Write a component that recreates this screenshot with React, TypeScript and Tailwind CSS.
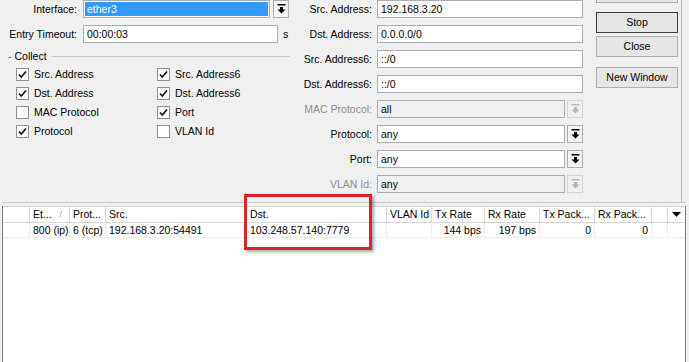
import React from "react";

const DropIcon = ({ disabled = false }: { disabled?: boolean }) => (
  <svg width="9" height="10" viewBox="0 0 9 10">
    <rect x="0.5" y="0" width="8" height="1.5" fill={disabled ? "#b5b5b5" : "#000"} />
    <rect x="3" y="3" width="3" height="3" fill={disabled ? "#b5b5b5" : "#000"} />
    <polygon points="0.5,5.5 8.5,5.5 4.5,9.5" fill={disabled ? "#b5b5b5" : "#000"} />
  </svg>
);

const DropBtn = ({ disabled = false }: { disabled?: boolean }) => (
  <div
    className={`w-[16px] h-[18px] flex items-center justify-center border ${
      disabled ? "border-[#d4d4d4] bg-[#f0f0f0]" : "border-[#adadad] bg-[#f4f4f4]"
    }`}
  >
    <DropIcon disabled={disabled} />
  </div>
);

const Check = ({ on }: { on: boolean }) => (
  <div className="w-[13px] h-[13px] border border-[#8f8f8f] bg-white flex items-center justify-center">
    {on && (
      <svg width="11" height="11" viewBox="0 0 11 11">
        <path d="M2 5.5 L4.3 8 L9 2.5" stroke="#111" strokeWidth="1.7" fill="none" />
      </svg>
    )}
  </div>
);

const CheckRow = ({ on, label }: { on: boolean; label: string }) => (
  <div className="flex items-center h-[19px]">
    <Check on={on} />
    <span className="ml-[5px]">{label}</span>
  </div>
);

const Field = ({
  label,
  value,
  drop = false,
  disabled = false,
}: {
  label: string;
  value: string;
  drop?: boolean;
  disabled?: boolean;
}) => (
  <div className="flex items-center h-[18px]">
    <div className={`w-[77px] text-right whitespace-nowrap ${disabled ? "text-[#8d8d8d]" : ""}`}>{label}</div>
    <div
      className={`ml-[5px] h-[18px] border border-[#abadb3] flex items-center pl-[3px] ${
        drop ? "w-[188px]" : "w-[206px]"
      } ${disabled ? "bg-[#f0f0f0]" : "bg-white"}`}
    >
      {value}
    </div>
    {drop && (
      <div className="ml-[2px]">
        <DropBtn disabled={disabled} />
      </div>
    )}
  </div>
);

const Btn = ({ label, def = false }: { label: string; def?: boolean }) => (
  <div
    className={`w-[82px] h-[21px] flex items-center justify-center bg-[#e6e6e6] border ${
      def ? "border-[#3c3c3c]" : "border-[#adadad]"
    }`}
  >
    {label}
  </div>
);

type Col = { w: number; label: string; align?: "left" | "right" };
const cols: Col[] = [
  { w: 27, label: "" },
  { w: 40, label: "Et..." },
  { w: 36, label: "Prot..." },
  { w: 141, label: "Src." },
  { w: 140, label: "Dst." },
  { w: 45, label: "VLAN Id" },
  { w: 53, label: "Tx Rate", align: "right" },
  { w: 55, label: "Rx Rate", align: "right" },
  { w: 55, label: "Tx Pack...", align: "right" },
  { w: 57, label: "Rx Pack...", align: "right" },
  { w: 16, label: "" },
];
const row = ["", "800 (ip)", "6 (tcp)", "192.168.3.20:54491", "103.248.57.140:7779", "", "144 bps", "197 bps", "0", "0", ""];

export default function App() {
  return (
    <div className="w-[689px] h-[362px] bg-[#f0f0f0] overflow-hidden relative font-['Liberation_Sans',Arial,sans-serif] text-[10.5px] text-black flex flex-col leading-none">
      {/* top panel */}
      <div className="h-[202px] shrink-0 flex">
        {/* left column */}
        <div className="w-[295px] flex flex-col">
          <div className="flex items-center h-[18px]">
            <div className="w-[77px] text-right">Interface:</div>
            <div className="ml-[6px] w-[187px] h-[18px] border border-[#abadb3] bg-white p-[1px]">
              <div className="h-full bg-[#3399ff] text-white flex items-center pl-[2px]">ether3</div>
            </div>
            <div className="ml-[3px]">
              <DropBtn />
            </div>
          </div>
          <div className="flex items-center h-[18px] mt-[7px]">
            <div className="w-[77px] text-right whitespace-nowrap">Entry Timeout:</div>
            <div className="ml-[6px] w-[195px] h-[18px] border border-[#abadb3] bg-white flex items-center pl-[3px]">
              00:00:03
            </div>
            <span className="ml-[5px]">s</span>
          </div>
          <div className="flex items-center h-[12px] mt-[7px] pl-[8px]">
            <span className="text-[#555]">-</span>
            <span className="ml-[3px]">Collect</span>
            <div className="ml-[5px] flex-1 mr-[5px] border-t border-[#c8c8c8]" />
          </div>
          <div className="flex mt-[3px]">
            <div className="ml-[16px] w-[141px] flex flex-col">
              <CheckRow on label="Src. Address" />
              <CheckRow on label="Dst. Address" />
              <CheckRow on={false} label="MAC Protocol" />
              <CheckRow on label="Protocol" />
            </div>
            <div className="flex flex-col">
              <CheckRow on label="Src. Address6" />
              <CheckRow on label="Dst. Address6" />
              <CheckRow on label="Port" />
              <CheckRow on={false} label="VLAN Id" />
            </div>
          </div>
        </div>
        {/* middle column */}
        <div className="w-[290px] flex flex-col gap-[7px]">
          <Field label="Src. Address:" value="192.168.3.20" />
          <Field label="Dst. Address:" value="0.0.0.0/0" />
          <Field label="Src. Address6:" value="::/0" />
          <Field label="Dst. Address6:" value="::/0" />
          <Field label="MAC Protocol:" value="all" drop disabled />
          <Field label="Protocol:" value="any" drop />
          <Field label="Port:" value="any" drop />
          <Field label="VLAN Id:" value="any" drop disabled />
        </div>
        {/* right column */}
        <div className="ml-[11px] flex flex-col -mt-[18px]">
          <Btn label="" />
          <div className="mt-[9px]">
            <Btn label="Stop" def />
          </div>
          <div className="mt-[3px]">
            <Btn label="Close" />
          </div>
          <div className="mt-[10px]">
            <Btn label="New Window" />
          </div>
        </div>
        <div className="ml-[3px] w-[1px] bg-[#b9b9b9]" />
      </div>
      <div className="h-[1px] bg-[#c8c8c8] ml-[3px] mr-[3px] shrink-0" />
      {/* table */}
      <div className="mt-[3px] ml-[2px] mr-[3px] flex-1 bg-white border-l border-r border-[#7a7a7a] flex flex-col">
        <div className="flex h-[17px] border-t border-b border-[#d6d6d6]">
          {cols.map((c, i) => (
            <div
              key={i}
              style={{ width: c.w }}
              className="shrink-0 h-full border-r border-[#d6d6d6] flex items-center pl-[3px] whitespace-nowrap overflow-hidden"
            >
              {c.label}
              {i === 1 && <span className="ml-[8px] text-[#9a9a9a] text-[9px]">/</span>}
            </div>
          ))}
          <div className="flex-1 h-full flex items-center justify-center">
            <svg width="9" height="5" viewBox="0 0 9 5">
              <polygon points="0,0 9,0 4.5,5" fill="#000" />
            </svg>
          </div>
        </div>
        <div className="flex h-[15px] border-b border-[#ececec]">
          {cols.map((c, i) => (
            <div
              key={i}
              style={{ width: c.w }}
              className={`shrink-0 h-full border-r border-[#ececec] flex items-center whitespace-nowrap overflow-hidden ${
                c.align === "right" ? "justify-end pr-[3px]" : "pl-[3px]"
              }`}
            >
              {row[i]}
            </div>
          ))}
        </div>
      </div>
      {/* highlight box */}
      <div className="absolute left-[244px] top-[194px] w-[128px] h-[56px] border-[3px] border-[#d8242a] shadow-[2px_2px_3px_rgba(0,0,0,0.35)]" />
    </div>
  );
}
